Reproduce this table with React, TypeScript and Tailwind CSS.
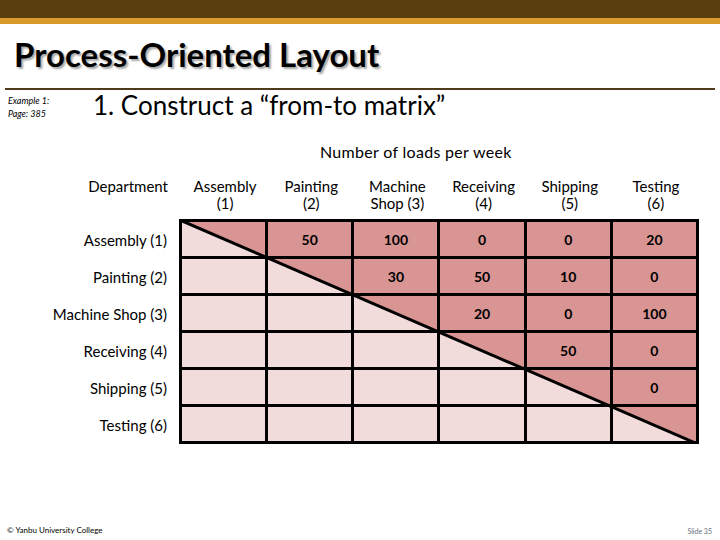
import React from "react";

const cols = [
  ["Assembly", "(1)"],
  ["Painting", "(2)"],
  ["Machine", "Shop (3)"],
  ["Receiving", "(4)"],
  ["Shipping", "(5)"],
  ["Testing", "(6)"],
];

const rows = [
  "Assembly (1)",
  "Painting (2)",
  "Machine Shop (3)",
  "Receiving (4)",
  "Shipping (5)",
  "Testing (6)",
];

const values: string[][] = [
  ["", "50", "100", "0", "0", "20"],
  ["", "", "30", "50", "10", "0"],
  ["", "", "", "20", "0", "100"],
  ["", "", "", "", "50", "0"],
  ["", "", "", "", "", "0"],
  ["", "", "", "", "", ""],
];

export default function App() {
  return (
    <div
      className="w-[720px] h-[540px] bg-white flex flex-col text-black overflow-hidden"
      style={{ fontFamily: "Lato, 'Open Sans', sans-serif" }}
    >
      <div className="h-[18px] bg-[#5a3e10]" />
      <div className="h-[6px] bg-[#d99a2b]" />

      <div className="mt-[12px] h-[36px] pl-[14px] flex items-center">
        <h1
          className="text-[33px] font-bold leading-[36px]"
          style={{ textShadow: "2px 2px 2px rgba(0,0,0,0.35)" }}
        >
          Process-Oriented Layout
        </h1>
      </div>

      <div className="mt-[16px] mx-[5px] h-[2px] bg-[#4d3b1c]" />

      <div className="flex h-[30px]">
        <div className="w-[93px] pl-[8px] pt-[4px] text-[9px] italic leading-[13px]">
          <div>Example 1:</div>
          <div>Page: 385</div>
        </div>
        <div className="text-[26px] leading-[30px]">
          1. Construct a “from-to matrix”
        </div>
      </div>

      <div className="mt-[22px] h-[20px] pl-[320px] text-[16px] tracking-[0.3px] leading-[20px]">
        Number of loads per week
      </div>

      <div className="flex mt-[16px]">
        <div className="w-[179px] flex flex-col">
          <div className="h-[41px] pr-[11px] text-right text-[15px] leading-[17px]">
            Department
          </div>
          <div className="pt-[3px] flex flex-col">
            {rows.map((r) => (
              <div
                key={r}
                className="h-[37px] pr-[12px] flex items-center justify-end text-[15px]"
              >
                {r}
              </div>
            ))}
          </div>
        </div>
        <div className="w-[520px] flex flex-col">
          <div className="h-[41px] grid grid-cols-6 pl-[3px]">
            {cols.map((c) => (
              <div key={c[0]} className="text-center text-[15px] leading-[17px]">
                <div>{c[0]}</div>
                <div>{c[1]}</div>
              </div>
            ))}
          </div>
          <div className="relative w-[520px] h-[225px]">
            <svg
              className="absolute inset-0"
              width="520"
              height="225"
              viewBox="0 0 520 225"
              preserveAspectRatio="none"
            >
              <polygon points="0,0 520,0 520,225" fill="#d99594" />
              <polygon points="0,0 0,225 520,225" fill="#f2dcdb" />
              <line x1="1" y1="1" x2="521" y2="226" stroke="#000" strokeWidth="3" />
            </svg>
            <div className="relative grid grid-cols-6 border-l-[3px] border-t-[3px] border-black">
              {values.map((row, i) =>
                row.map((v, j) => (
                  <div
                    key={`${i}-${j}`}
                    className="h-[37px] border-r-[3px] border-b-[3px] border-black flex items-center justify-center text-[14px] font-bold"
                  >
                    {v}
                  </div>
                ))
              )}
            </div>
          </div>
        </div>
      </div>

      <div className="mt-auto flex justify-between items-end px-[7px] pb-[4px]">
        <div className="text-[8px] leading-[10px] mb-[1px]">© Yanbu University College</div>
        <div className="text-[7px] leading-[9px] text-gray-500 mr-[1px]">Slide 35</div>
      </div>
    </div>
  );
}
